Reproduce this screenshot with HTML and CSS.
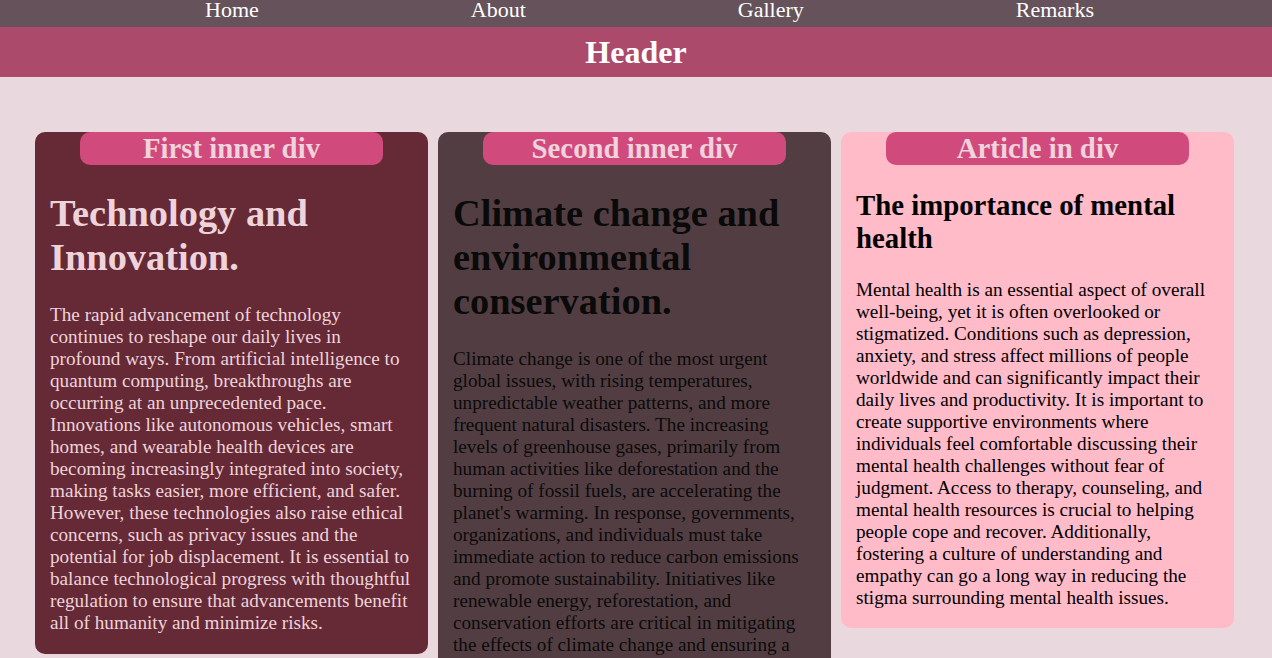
FILE: index.html
```html
<!DOCTYPE html>
<html>
<head>
<meta charset="utf-8">
<link rel="stylesheet" href="styles.css">
</head>
<body>
<nav class="topnav">
  <a href="#">Home</a>
  <a href="#">About</a>
  <a href="#">Gallery</a>
  <a href="#">Remarks</a>
</nav>
<header class="banner">Header</header>
<main class="cards">
  <div class="card card-tech">
    <h2 class="pill">First inner div</h2>
    <h1 class="title">Technology and Innovation.</h1>
    <p class="text">The rapid advancement of technology continues to reshape our daily lives in profound ways. From artificial intelligence to quantum computing, breakthroughs are occurring at an unprecedented pace. Innovations like autonomous vehicles, smart homes, and wearable health devices are becoming increasingly integrated into society, making tasks easier, more efficient, and safer. However, these technologies also raise ethical concerns, such as privacy issues and the potential for job displacement. It is essential to balance technological progress with thoughtful regulation to ensure that advancements benefit all of humanity and minimize risks.</p>
  </div>
  <div class="card card-climate">
    <h2 class="pill">Second inner div</h2>
    <h1 class="title">Climate change and environmental conservation.</h1>
    <p class="text">Climate change is one of the most urgent global issues, with rising temperatures, unpredictable weather patterns, and more frequent natural disasters. The increasing levels of greenhouse gases, primarily from human activities like deforestation and the burning of fossil fuels, are accelerating the planet's warming. In response, governments, organizations, and individuals must take immediate action to reduce carbon emissions and promote sustainability. Initiatives like renewable energy, reforestation, and conservation efforts are critical in mitigating the effects of climate change and ensuring a sustainable future for generations to come.</p>
  </div>
  <div class="card card-health">
    <h2 class="pill">Article in div</h2>
    <article>
      <h1 class="title-small">The importance of mental health</h1>
      <p class="text">Mental health is an essential aspect of overall well-being, yet it is often overlooked or stigmatized. Conditions such as depression, anxiety, and stress affect millions of people worldwide and can significantly impact their daily lives and productivity. It is important to create supportive environments where individuals feel comfortable discussing their mental health challenges without fear of judgment. Access to therapy, counseling, and mental health resources is crucial to helping people cope and recover. Additionally, fostering a culture of understanding and empathy can go a long way in reducing the stigma surrounding mental health issues.</p>
    </article>
  </div>
</main>
</body>
</html>
```
FILE: styles.css
```css
html, body {
  margin: 0;
  padding: 0;
}
body {
  background: #e9d8de;
  font-family: "Liberation Serif", "Times New Roman", serif;
  font-size: 19.2px;
}
.topnav {
  display: flex;
  justify-content: space-between;
  height: 27px;
  box-sizing: border-box;
  padding: 0 178px 0 205px;
  background: #65525a;
}
.topnav a {
  color: #ffffff;
  text-decoration: none;
  font-size: 22px;
  line-height: 20px;
}
.banner {
  height: 50px;
  display: flex;
  align-items: center;
  justify-content: center;
  background: #ac4a6c;
  color: #ffffff;
  font-size: 32px;
  font-weight: bold;
}
.cards {
  display: grid;
  grid-template-columns: repeat(3, 393px);
  column-gap: 10px;
  align-items: start;
  padding: 55px 0 0 35px;
}
.card {
  display: flow-root;
  border-radius: 10px;
  padding: 0 15px;
}
.card-tech {
  background: #652a36;
  color: #eed3da;
}
.card-climate {
  background: #523e42;
  color: #0a0a0a;
}
.card-health {
  background: #ffbbc8;
  color: #000000;
}
.pill {
  width: 303px;
  margin: 0 auto;
  background: #d14a7c;
  color: #f0d3dc;
  border-radius: 10px;
  text-align: center;
  font-size: 28.8px;
  font-weight: bold;
  line-height: 33px;
}
.title {
  font-size: 38.4px;
  margin: 25.7px 0;
  font-weight: bold;
}
.title-small {
  font-size: 28.8px;
  margin: 23.9px 0;
  font-weight: bold;
}
.text {
  margin: 19.2px 0;
  font-size: 19.2px;
}
article {
  display: block;
}
```
